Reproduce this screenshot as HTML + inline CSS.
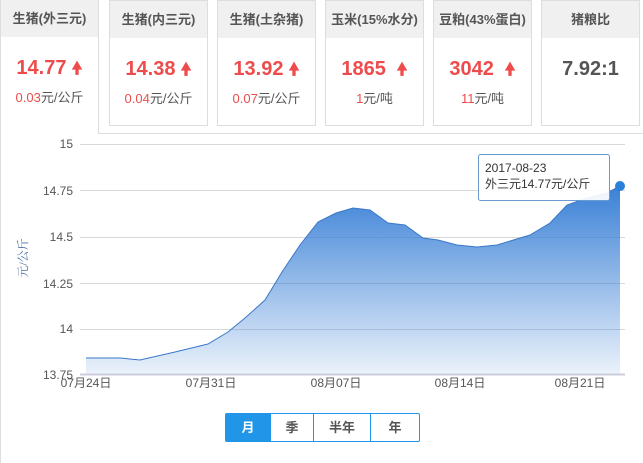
<!DOCTYPE html>
<html><head><meta charset="utf-8"><style>
*{margin:0;padding:0;box-sizing:border-box}
body{width:643px;height:451px;background:#fff;font-family:"Liberation Sans","Noto Sans CJK SC",sans-serif;position:relative;overflow:hidden}
.frame{position:absolute;left:0;top:133px;width:643px;height:330px;border-left:1px solid #ddd;border-top:1px solid #ddd}
.card{position:absolute;top:0;width:99px;height:126px;border:1px solid #ddd;background:#fff;text-align:center}
.card.sel{height:134px;border-bottom:none;border-top:none;border-left:1px solid #ddd;z-index:2}
.hd{height:37px;background:#f0f0f0;line-height:37px;font-size:13px;font-weight:bold;color:#555}
.v{margin-top:18px;font-size:20px;font-weight:bold;color:#ee4c4c;height:26px;line-height:26px}
.v .a{font-size:17px;margin-left:5px}
.s{margin-top:6px;font-size:13px;color:#555}
.s b{font-weight:normal;color:#ee4c4c}
.btns{position:absolute;left:225px;top:413px;height:29px;display:flex;border:1px solid #2196e8;border-radius:2px}
.btns div{height:27px;line-height:27px;font-size:13px;font-weight:bold;color:#555;text-align:center;border-left:1px solid #2196e8}
.btns div:first-child{border-left:none;background:#2196e8;color:#fff}
</style></head><body>
<div class="frame"></div>
<div class="card sel" style="left:0"><div class="hd">生猪(外三元)</div><div class="v">14.77<span class="a">🠝</span></div><div class="s"><b>0.03</b>元/公斤</div></div>
<div class="card" style="left:109px"><div class="hd">生猪(内三元)</div><div class="v">14.38<span class="a">🠝</span></div><div class="s"><b>0.04</b>元/公斤</div></div>
<div class="card" style="left:217px"><div class="hd">生猪(土杂猪)</div><div class="v">13.92<span class="a">🠝</span></div><div class="s"><b>0.07</b>元/公斤</div></div>
<div class="card" style="left:325px"><div class="hd">玉米(15%水分)</div><div class="v">1865 <span class="a">🠝</span></div><div class="s"><b>1</b>元/吨</div></div>
<div class="card" style="left:433px"><div class="hd">豆粕(43%蛋白)</div><div class="v">3042 <span class="a">🠝</span></div><div class="s"><b>11</b>元/吨</div></div>
<div class="card" style="left:541px"><div class="hd">猪粮比</div><div class="v" style="color:#555">7.92:1</div></div>
<svg style="position:absolute;left:0;top:0" width="643" height="451">
<defs><linearGradient id="g" x1="0" y1="0" x2="0" y2="1"><stop offset="0" stop-color="#3a80d6"/><stop offset="1" stop-color="#3a80d6" stop-opacity="0.1"/></linearGradient></defs>
<g stroke="#d8d8d8" stroke-width="1">
<line x1="80" y1="144.5" x2="625" y2="144.5"/><line x1="80" y1="190.5" x2="625" y2="190.5"/><line x1="80" y1="237.5" x2="625" y2="237.5"/><line x1="80" y1="283.5" x2="625" y2="283.5"/><line x1="80" y1="329.5" x2="625" y2="329.5"/></g>
<path d="M86 358 L120 358 L140 360 L175 352 L208 344 L228 332 L245 318 L265 300 L282 272 L300 245 L318 222 L336 213 L353 208 L370 210 L388 223 L405 225 L423 238 L438 240 L457 245 L477 247 L497 245 L530 235 L550 223 L567 205 L587 198 L607 193 L620 186 L620 374 L86 374 Z" fill="url(#g)"/>
<path d="M86 358 L120 358 L140 360 L175 352 L208 344 L228 332 L245 318 L265 300 L282 272 L300 245 L318 222 L336 213 L353 208 L370 210 L388 223 L405 225 L423 238 L438 240 L457 245 L477 247 L497 245 L530 235 L550 223 L567 205 L587 198 L607 193 L620 186" fill="none" stroke="#3a78c8" stroke-width="1"/>
<line x1="80" y1="374.5" x2="625" y2="374.5" stroke="#ccd" stroke-width="2"/>
<circle cx="620" cy="186" r="5" fill="#2a7fd8"/>
<g font-size="12" fill="#555" text-anchor="end" font-family="Liberation Sans,sans-serif">
<text x="73" y="148">15</text><text x="73" y="195">14.75</text><text x="73" y="241">14.5</text><text x="73" y="288">14.25</text><text x="73" y="333">14</text><text x="73" y="379">13.75</text></g>
<g font-size="12" fill="#555" text-anchor="middle" font-family="Liberation Sans,Noto Sans CJK SC,sans-serif">
<text x="86" y="387">07月24日</text><text x="211" y="387">07月31日</text><text x="336" y="387">08月07日</text><text x="460" y="387">08月14日</text><text x="580" y="387">08月21日</text></g>
<text transform="translate(27,258) rotate(-90)" font-size="12" fill="#4a6fa5" text-anchor="middle" font-family="Liberation Serif,Noto Serif CJK SC,serif">元/公斤</text>
<rect x="478.5" y="154.5" width="131" height="46" rx="2" fill="#fff" fill-opacity="0.92" stroke="#6a9bd0"/>
<text x="485" y="172" font-size="12" fill="#333" font-family="Liberation Sans,Noto Sans CJK SC,sans-serif">2017-08-23</text>
<text x="485" y="188" font-size="12" fill="#333" font-family="Liberation Sans,Noto Sans CJK SC,sans-serif">外三元14.77元/公斤</text>
</svg>
<div class="btns"><div style="width:44px">月</div><div style="width:43px">季</div><div style="width:57px">半年</div><div style="width:49px">年</div></div>
</body></html>
